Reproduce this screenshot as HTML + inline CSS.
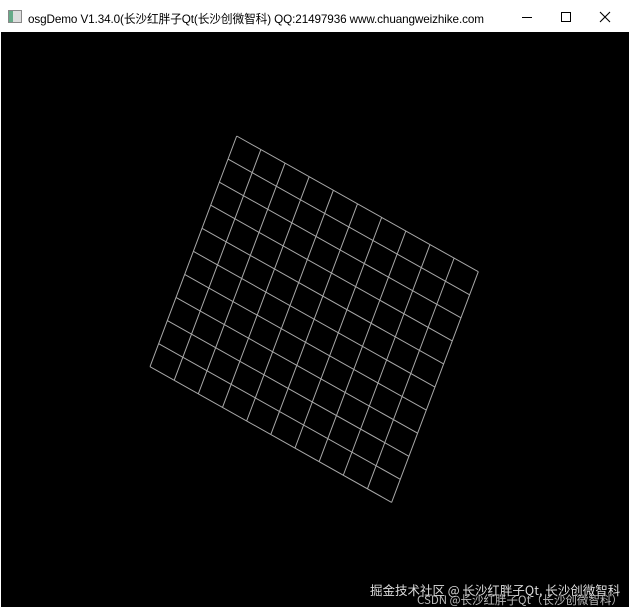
<!DOCTYPE html>
<html><head><meta charset="utf-8"><style>
html,body{margin:0;padding:0;width:633px;height:610px;background:#fff;overflow:hidden;font-family:"Liberation Sans","Noto Sans CJK SC",sans-serif}
.title{position:absolute;left:0;top:0;width:633px;height:32px;background:#fff}
.title .t{position:absolute;left:28px;top:10px;font-size:11.7px;color:#000;white-space:nowrap;letter-spacing:-0.1px}
.icon{position:absolute;left:8px;top:10px;width:12px;height:11px;border:1px solid #888;background:linear-gradient(90deg,#6a8 0 4px,#ddd 4px)}
.view{position:absolute;left:1px;top:32px;width:628px;height:575px;background:#000}
.wm1{position:absolute;left:370px;top:580px;color:#ddd;font-size:12.5px;white-space:nowrap;font-family:"Noto Sans CJK SC",sans-serif}
.wm2{position:absolute;left:417px;top:592px;color:#bbb;font-size:11.5px;white-space:nowrap;font-family:"Noto Sans CJK SC",sans-serif}
</style></head><body>
<div class="title"><div class="icon"></div><div class="t">osgDemo V1.34.0(长沙红胖子Qt(长沙创微智科) QQ:21497936 www.chuangweizhike.com</div>
<svg style="position:absolute;left:0;top:0" width="633" height="32">
<line x1="522" y1="17.5" x2="532" y2="17.5" stroke="#000" stroke-width="1"/>
<rect x="561.5" y="12.5" width="9" height="9" fill="none" stroke="#000"/>
<path d="M600 12 L610 22 M610 12 L600 22" stroke="#000" stroke-width="1.1"/>
</svg></div>
<div class="view"></div>
<svg style="position:absolute;left:0;top:0" width="633" height="610">
<g transform="matrix(24.16,13.57,-8.67,23.07,236.7,136)" stroke="#a8a8a8" stroke-width="1" fill="none">
<path vector-effect="non-scaling-stroke" d="M0 0V10M1 0V10M2 0V10M3 0V10M4 0V10M5 0V10M6 0V10M7 0V10M8 0V10M9 0V10M10 0V10M0 0H10M0 1H10M0 2H10M0 3H10M0 4H10M0 5H10M0 6H10M0 7H10M0 8H10M0 9H10M0 10H10"/>
</g></svg>
<div class="wm1">掘金技术社区 @ 长沙红胖子Qt, 长沙创微智科</div>
<div class="wm2">CSDN @长沙红胖子Qt（长沙创微智科）</div>
</body></html>
